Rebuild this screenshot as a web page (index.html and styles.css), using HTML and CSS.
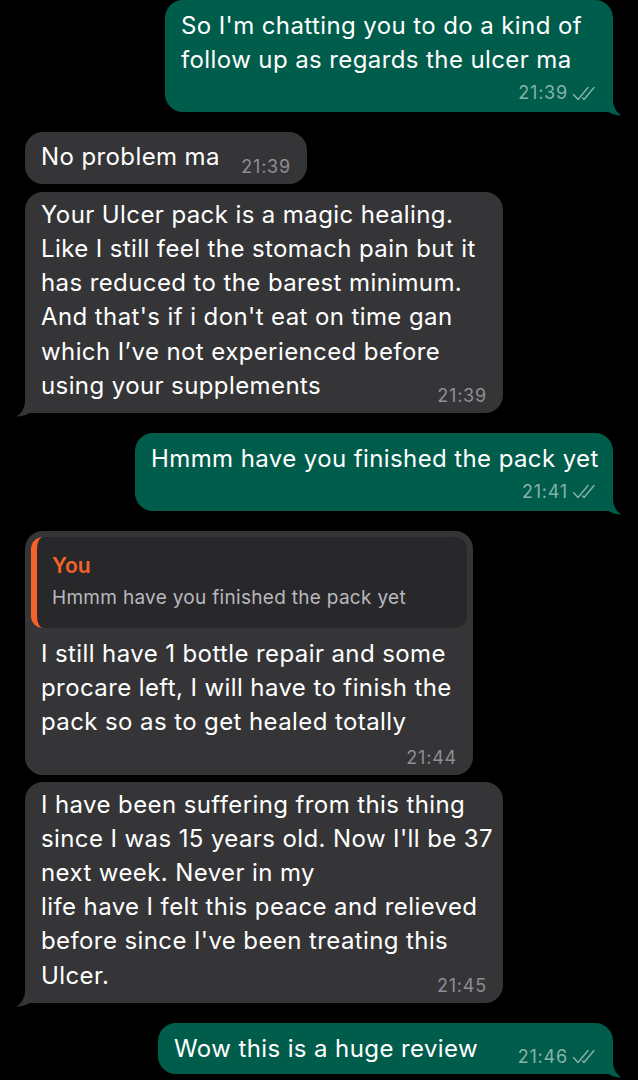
FILE: index.html
```html
<!DOCTYPE html>
<html lang="en">
<head>
<meta charset="utf-8">
<title>Chat</title>
<link rel="stylesheet" href="styles.css">
</head>
<body>
<main class="chat">

  <div class="row out">
    <div class="bubble out w448">
      <p class="text">So I'm chatting you to do a kind of<br>follow up as regards the ulcer ma</p>
      <div class="meta"><span class="time">21:39</span><svg class="ticks" viewBox="0 0 25 15" width="25" height="15"><path d="M1.5 8.5 L6 13.5 L16 1.5"/><path d="M10.5 12 L12 13.5 L22 1.5"/></svg></div>
      <svg class="tail tail-out" viewBox="0 0 26 22" width="26" height="22"><path d="M0 0 H17 V7 C17.5 13 20.5 18.5 25.5 21.5 C21 21.8 16.5 20.5 12.5 18 L0 18 Z"/></svg>
    </div>
  </div>

  <div class="row in gap-l">
    <div class="bubble in inline-meta short w282">
      <p class="text">No problem ma<span class="time inline">21:39</span></p>
    </div>
  </div>

  <div class="row in gap-s">
    <div class="bubble in inline-meta w478">
      <p class="text">Your Ulcer pack is a magic healing.<br>Like I still feel the stomach pain but it<br>has reduced to the barest minimum.<br>And that's if i don't eat on time gan<br>which I’ve not experienced before<br>using your supplements<span class="time inline">21:39</span></p>
      <svg class="tail tail-in" viewBox="0 0 26 22" width="26" height="22"><path d="M0 0 H17 V7 C17.5 13 20.5 18.5 25.5 21.5 C21 21.8 16.5 20.5 12.5 18 L0 18 Z"/></svg>
    </div>
  </div>

  <div class="row out gap-l">
    <div class="bubble out w478">
      <p class="text">Hmmm have you finished the pack yet</p>
      <div class="meta"><span class="time">21:41</span><svg class="ticks" viewBox="0 0 25 15" width="25" height="15"><path d="M1.5 8.5 L6 13.5 L16 1.5"/><path d="M10.5 12 L12 13.5 L22 1.5"/></svg></div>
      <svg class="tail tail-out" viewBox="0 0 26 22" width="26" height="22"><path d="M0 0 H17 V7 C17.5 13 20.5 18.5 25.5 21.5 C21 21.8 16.5 20.5 12.5 18 L0 18 Z"/></svg>
    </div>
  </div>

  <div class="row in gap-l">
    <div class="bubble in reply w448">
      <div class="quote">
        <div class="quote-name">You</div>
        <div class="quote-text">Hmmm have you finished the pack yet</div>
      </div>
      <p class="text">I still have 1 bottle repair and some<br>procare left, I will have to finish the<br>pack so as to get healed totally</p>
      <div class="meta"><span class="time">21:44</span></div>
    </div>
  </div>

  <div class="row in gap-xs">
    <div class="bubble in inline-meta w478">
      <p class="text">I have been suffering from this thing<br>since I was 15 years old. Now I'll be 37<br>next week. Never in my<br>life have I felt this peace and relieved<br>before since I've been treating this<br>Ulcer.<span class="time inline">21:45</span></p>
      <svg class="tail tail-in" viewBox="0 0 26 22" width="26" height="22"><path d="M0 0 H17 V7 C17.5 13 20.5 18.5 25.5 21.5 C21 21.8 16.5 20.5 12.5 18 L0 18 Z"/></svg>
    </div>
  </div>

  <div class="row out gap-l">
    <div class="bubble out inline-meta w455">
      <p class="text">Wow this is a huge review<span class="time inline">21:46<svg class="ticks" viewBox="0 0 25 15" width="25" height="15"><path d="M1.5 8.5 L6 13.5 L16 1.5"/><path d="M10.5 12 L12 13.5 L22 1.5"/></svg></span></p>
      <svg class="tail tail-out" viewBox="0 0 26 22" width="26" height="22"><path d="M0 0 H17 V7 C17.5 13 20.5 18.5 25.5 21.5 C21 21.8 16.5 20.5 12.5 18 L0 18 Z"/></svg>
    </div>
  </div>

</main>
</body>
</html>
```

FILE: styles.css
```css
html, body {
  margin: 0;
  padding: 0;
  background: #000;
}

body {
  width: 638px;
  height: 1080px;
  overflow: hidden;
  font-family: "Inter", "Noto Sans", "Liberation Sans", sans-serif;
  color: #fff;
}

.chat {
  display: flex;
  flex-direction: column;
  padding: 0 25px;
}

.row {
  display: flex;
}

.row.out { justify-content: flex-end; }
.row.in { justify-content: flex-start; }

.gap-xs { margin-top: 7px; }
.gap-s { margin-top: 8px; }
.gap-l { margin-top: 20px; }

.bubble {
  position: relative;
  box-sizing: border-box;
  border-radius: 18px;
  padding: 6px 16px 8px 16px;
}

.bubble.out {
  background: #005c4b;
  padding-top: 9px;
}
.bubble.in { background: #353537; }

.bubble.inline-meta { padding-bottom: 6px; }
.bubble.short { padding-top: 8px; }

.w282 { width: 282px; }
.w448 { width: 448px; }
.w455 { width: 455px; }
.w478 { width: 478px; }

.text {
  margin: 0;
  display: flow-root;
  font-size: 24px;
  line-height: 34.1px;
  white-space: nowrap;
  letter-spacing: 0.4px;
}

.time {
  font-size: 18px;
  line-height: 22px;
  letter-spacing: 0.8px;
}

.bubble.out .time { color: #86b3a8; }
.bubble.in .time { color: #8e8e93; }

.time.inline {
  float: right;
  margin-top: 16px;
  display: flex;
  align-items: center;
}

.bubble.out .time.inline { margin-top: 14px; }

.meta {
  display: flex;
  justify-content: flex-end;
  align-items: center;
  margin-top: 8px;
  height: 22px;
}

.bubble.out .meta { margin-top: 5px; }

.ticks {
  margin-left: 4px;
  fill: none;
  stroke: #86b3a8;
  stroke-width: 1.4;
  stroke-linecap: round;
  stroke-linejoin: round;
}

.tail {
  position: absolute;
  bottom: -4px;
}

.tail-out {
  right: -9px;
}

.tail-in {
  left: -9px;
  transform: scaleX(-1);
}

.bubble.out .tail path { fill: #005c4b; }
.bubble.in .tail path { fill: #353537; }

.bubble.reply {
  padding: 6px 6px 6px 6px;
}

.bubble.reply .text,
.bubble.reply .meta {
  padding: 0 10px;
}

.bubble.reply .text {
  margin-top: 9px;
}

.quote {
  background: #28282a;
  border-radius: 12px;
  border-left: 6px solid #f5622a;
  padding: 15px 14px 17px 15px;
}

.quote-name {
  color: #f5622a;
  font-size: 21px;
  font-weight: 600;
  line-height: 28px;
}

.quote-text {
  color: #b9b9be;
  font-size: 19px;
  line-height: 26px;
  margin-top: 5px;
  letter-spacing: 0.3px;
  white-space: nowrap;
}
```
